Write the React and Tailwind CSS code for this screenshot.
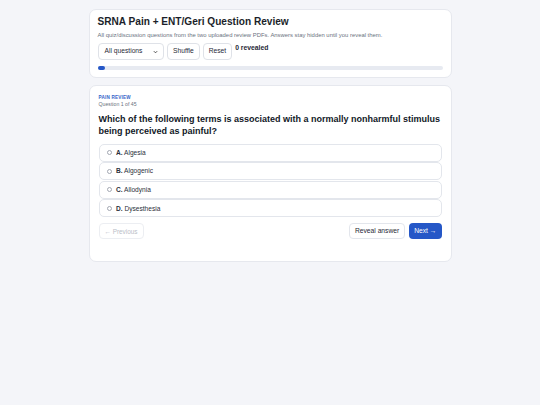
import React from "react";

const options = [
  ["A.", "Algesia"],
  ["B.", "Algogenic"],
  ["C.", "Allodynia"],
  ["D.", "Dysesthesia"],
];

export default function App() {
  return (
    <div
      className="min-h-[405px] w-full bg-[#f4f5f9] pt-[9px]"
      style={{ fontFamily: '"Liberation Sans", Arial, sans-serif' }}
    >
      <div className="mx-auto flex w-[363px] flex-col gap-[7.5px]">
        <div className="rounded-[7px] border border-[#e6e8ee] bg-white px-[8px] pt-[6px] pb-[6.5px]">
          <h1 className="text-[10.1px] font-bold leading-[12px] text-[#1b1f2a]">
            SRNA Pain + ENT/Geri Question Review
          </h1>
          <p className="mt-[3.5px] text-[5.9px] leading-[7px] text-[#6b7280]">
            All quiz/discussion questions from the two uploaded review PDFs. Answers stay hidden until you reveal them.
          </p>
          <div className="mt-[4.5px] flex items-start gap-[3.5px]">
            <div className="flex h-[17px] w-[66px] items-center justify-between rounded-[4px] border border-[#dfe2e8] bg-white pl-[6px] pr-[5px] text-[6.7px] text-[#1f2937]">
              <span>All questions</span>
              <svg width="5" height="4" viewBox="0 0 6 4">
                <path d="M1 1 L3 3 L5 1" fill="none" stroke="#333" strokeWidth="1" />
              </svg>
            </div>
            <div className="flex h-[17px] items-center rounded-[4px] border border-[#dfe2e8] bg-white px-[5px] text-[6.7px] text-[#1f2937]">
              Shuffle
            </div>
            <div className="flex h-[17px] items-center rounded-[4px] border border-[#dfe2e8] bg-white px-[4.5px] text-[6.7px] text-[#1f2937]">
              Reset
            </div>
            <div className="pt-[1px] text-[6.8px] font-bold leading-[8px] text-[#1f2937]">0 revealed</div>
          </div>
          <div className="mt-[6px] h-[4px] w-full rounded-full bg-[#e7eaf1]">
            <div className="h-[4px] w-[7px] rounded-full bg-[#2557c7]" />
          </div>
        </div>

        <div className="rounded-[7px] border border-[#e6e8ee] bg-white px-[9px] pt-[8.5px] pb-[22px]">
          <div className="text-[4.6px] font-bold uppercase leading-[6px] tracking-[0.2px] text-[#3563c9]">
            Pain Review
          </div>
          <div className="text-[5.2px] leading-[6px] text-[#6b7280]">Question 1 of 45</div>
          <h2 className="mt-[6px] text-[9px] font-bold leading-[12px] text-[#111827]">
            Which of the following terms is associated with a normally nonharmful stimulus being perceived as painful?
          </h2>
          <div className="mt-[7px] flex flex-col gap-[0.67px]">
            {options.map(([l, t]) => (
              <div
                key={l}
                className="flex h-[18px] items-center gap-[4.5px] rounded-[5px] border border-[#e3e6ec] bg-white pl-[7px] text-[6.6px] text-[#2a2f3a]"
              >
                <span className="h-[5px] w-[5px] rounded-full border-[0.8px] border-[#a3a8b2]" />
                <span>
                  <b>{l}</b> {t}
                </span>
              </div>
            ))}
          </div>
          <div className="mt-[6px] flex items-center justify-between">
            <div className="flex h-[16px] items-center rounded-[4px] border border-[#eceef2] bg-white px-[5px] text-[6.4px] text-[#b9bec7]">
              ← Previous
            </div>
            <div className="flex gap-[4px]">
              <div className="flex h-[16px] items-center rounded-[4px] border border-[#e3e6ec] bg-white px-[5px] text-[6.7px] text-[#1f2937]">
                Reveal answer
              </div>
              <div className="flex h-[16px] items-center rounded-[4px] bg-[#2557c7] px-[5px] text-[6.7px] text-white">
                Next →
              </div>
            </div>
          </div>
        </div>
      </div>
    </div>
  );
}
